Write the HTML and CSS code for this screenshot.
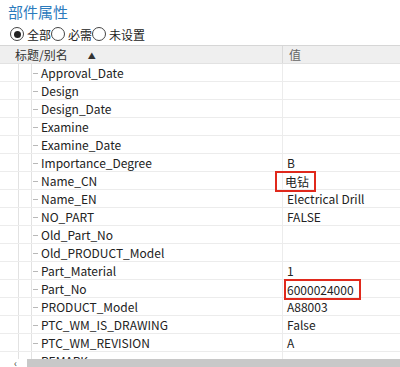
FILE: index.html
```html
<!DOCTYPE html>
<html>
<head>
<meta charset="utf-8">
<link rel="stylesheet" href="styles.css">
</head>
<body>
<div class="panel">
  <div class="title">部件属性</div>
  <div class="filters">
    <label class="opt"><span class="radio checked"></span>全部</label>
    <label class="opt"><span class="radio"></span>必需</label>
    <label class="opt"><span class="radio"></span>未设置</label>
  </div>
  <div class="table">
    <div class="head">
      <div class="hname">标题/别名<span class="sort">▲</span></div>
      <div class="hval">值</div>
    </div>
    <div class="rows">
      <div class="row"><div class="name"><span class="g1"></span><span class="g2"></span><span class="dash"></span>Approval_Date</div><div class="val"></div></div>
      <div class="row"><div class="name"><span class="g1"></span><span class="g2"></span><span class="dash"></span>Design</div><div class="val"></div></div>
      <div class="row"><div class="name"><span class="g1"></span><span class="g2"></span><span class="dash"></span>Design_Date</div><div class="val"></div></div>
      <div class="row"><div class="name"><span class="g1"></span><span class="g2"></span><span class="dash"></span>Examine</div><div class="val"></div></div>
      <div class="row"><div class="name"><span class="g1"></span><span class="g2"></span><span class="dash"></span>Examine_Date</div><div class="val"></div></div>
      <div class="row"><div class="name"><span class="g1"></span><span class="g2"></span><span class="dash"></span>Importance_Degree</div><div class="val">B</div></div>
      <div class="row"><div class="name"><span class="g1"></span><span class="g2"></span><span class="dash"></span>Name_CN</div><div class="val"><span class="mark cn">电钻</span></div></div>
      <div class="row"><div class="name"><span class="g1"></span><span class="g2"></span><span class="dash"></span>Name_EN</div><div class="val">Electrical Drill</div></div>
      <div class="row"><div class="name"><span class="g1"></span><span class="g2"></span><span class="dash"></span>NO_PART</div><div class="val">FALSE</div></div>
      <div class="row"><div class="name"><span class="g1"></span><span class="g2"></span><span class="dash"></span>Old_Part_No</div><div class="val"></div></div>
      <div class="row"><div class="name"><span class="g1"></span><span class="g2"></span><span class="dash"></span>Old_PRODUCT_Model</div><div class="val"></div></div>
      <div class="row"><div class="name"><span class="g1"></span><span class="g2"></span><span class="dash"></span>Part_Material</div><div class="val">1</div></div>
      <div class="row"><div class="name"><span class="g1"></span><span class="g2"></span><span class="dash"></span>Part_No</div><div class="val"><span class="mark no">6000024000</span></div></div>
      <div class="row"><div class="name"><span class="g1"></span><span class="g2"></span><span class="dash"></span>PRODUCT_Model</div><div class="val">A88003</div></div>
      <div class="row"><div class="name"><span class="g1"></span><span class="g2"></span><span class="dash"></span>PTC_WM_IS_DRAWING</div><div class="val">False</div></div>
      <div class="row"><div class="name"><span class="g1"></span><span class="g2"></span><span class="dash"></span>PTC_WM_REVISION</div><div class="val">A</div></div>
      <div class="row"><div class="name"><span class="g1"></span><span class="g2"></span><span class="dash"></span>REMARK</div><div class="val"></div></div>
    </div>
    <div class="hscroll"><span class="arrow">‹</span><span class="track"></span></div>
  </div>
</div>
</body>
</html>
```
FILE: styles.css
```css
* { box-sizing: border-box; }
html, body { margin: 0; padding: 0; background: #fff; overflow: hidden; }
body { width: 400px; height: 367px; font-family: "Noto Sans CJK SC", "Microsoft YaHei", sans-serif; font-size: 12px; color: #222; }
.panel { position: relative; height: 367px; overflow: hidden; }
.title { color: #2c7bbd; font-size: 15px; line-height: 20px; padding: 2px 0 0 8px; height: 24px; }
.filters { display: flex; align-items: center; height: 20px; padding-left: 10px; font-size: 12px; color: #222; }
.opt { display: flex; align-items: center; }
.radio { width: 14px; height: 14px; border: 1px solid #444; border-radius: 50%; margin-right: 3px; position: relative; background: #fff; }
.radio.checked::after { content: ""; position: absolute; left: 2.5px; top: 2.5px; width: 7px; height: 7px; border-radius: 50%; background: #222; }
.table { margin-top: 1px; border-top: 1px solid #d6d6d6; }
.head { display: flex; height: 18px; background: #efefef; border-bottom: 1px solid #e2e2e2; line-height: 18px; }
.hname { width: 283px; padding-left: 15px; border-right: 1px solid #d9d9d9; color: #333; }
.sort { font-size: 8px; margin-left: 20px; position: relative; top: -1px; }
.hval { padding-left: 6px; color: #666; }
.row { display: flex; height: 18px; line-height: 17px; border-bottom: 1px solid #ececec; }
.name { width: 283px; display: flex; align-items: stretch; border-right: 1px solid #ececec; color: #222; }
.g1 { width: 19px; border-right: 1px solid #e2e2e2; margin-left: 0; }
.g2 { width: 13px; border-right: 1px solid #e2e2e2; }
.dash { width: 9px; position: relative; }
.dash::after { content: ""; position: absolute; left: 1px; top: 9px; width: 5px; height: 1px; background: #b8b8b8; }
.val { padding-left: 4px; color: #222; }
.mark { display: inline-block; border: 2px solid #e0291c; line-height: 15px; position: relative; top: -1px; }
.mark.cn { padding: 1px 5px 1px 8px; margin-left: -12px; }
.mark.no { padding: 1px 5px 1px 1px; margin-left: -3px; }
.hscroll { position: absolute; left: 0; right: 0; bottom: 0; height: 8px; display: flex; background: #fff; }
.arrow { width: 27px; font-size: 10px; line-height: 8px; padding-left: 14px; color: #444; }
.track { flex: 1; background: #c8c8c8; }
```
